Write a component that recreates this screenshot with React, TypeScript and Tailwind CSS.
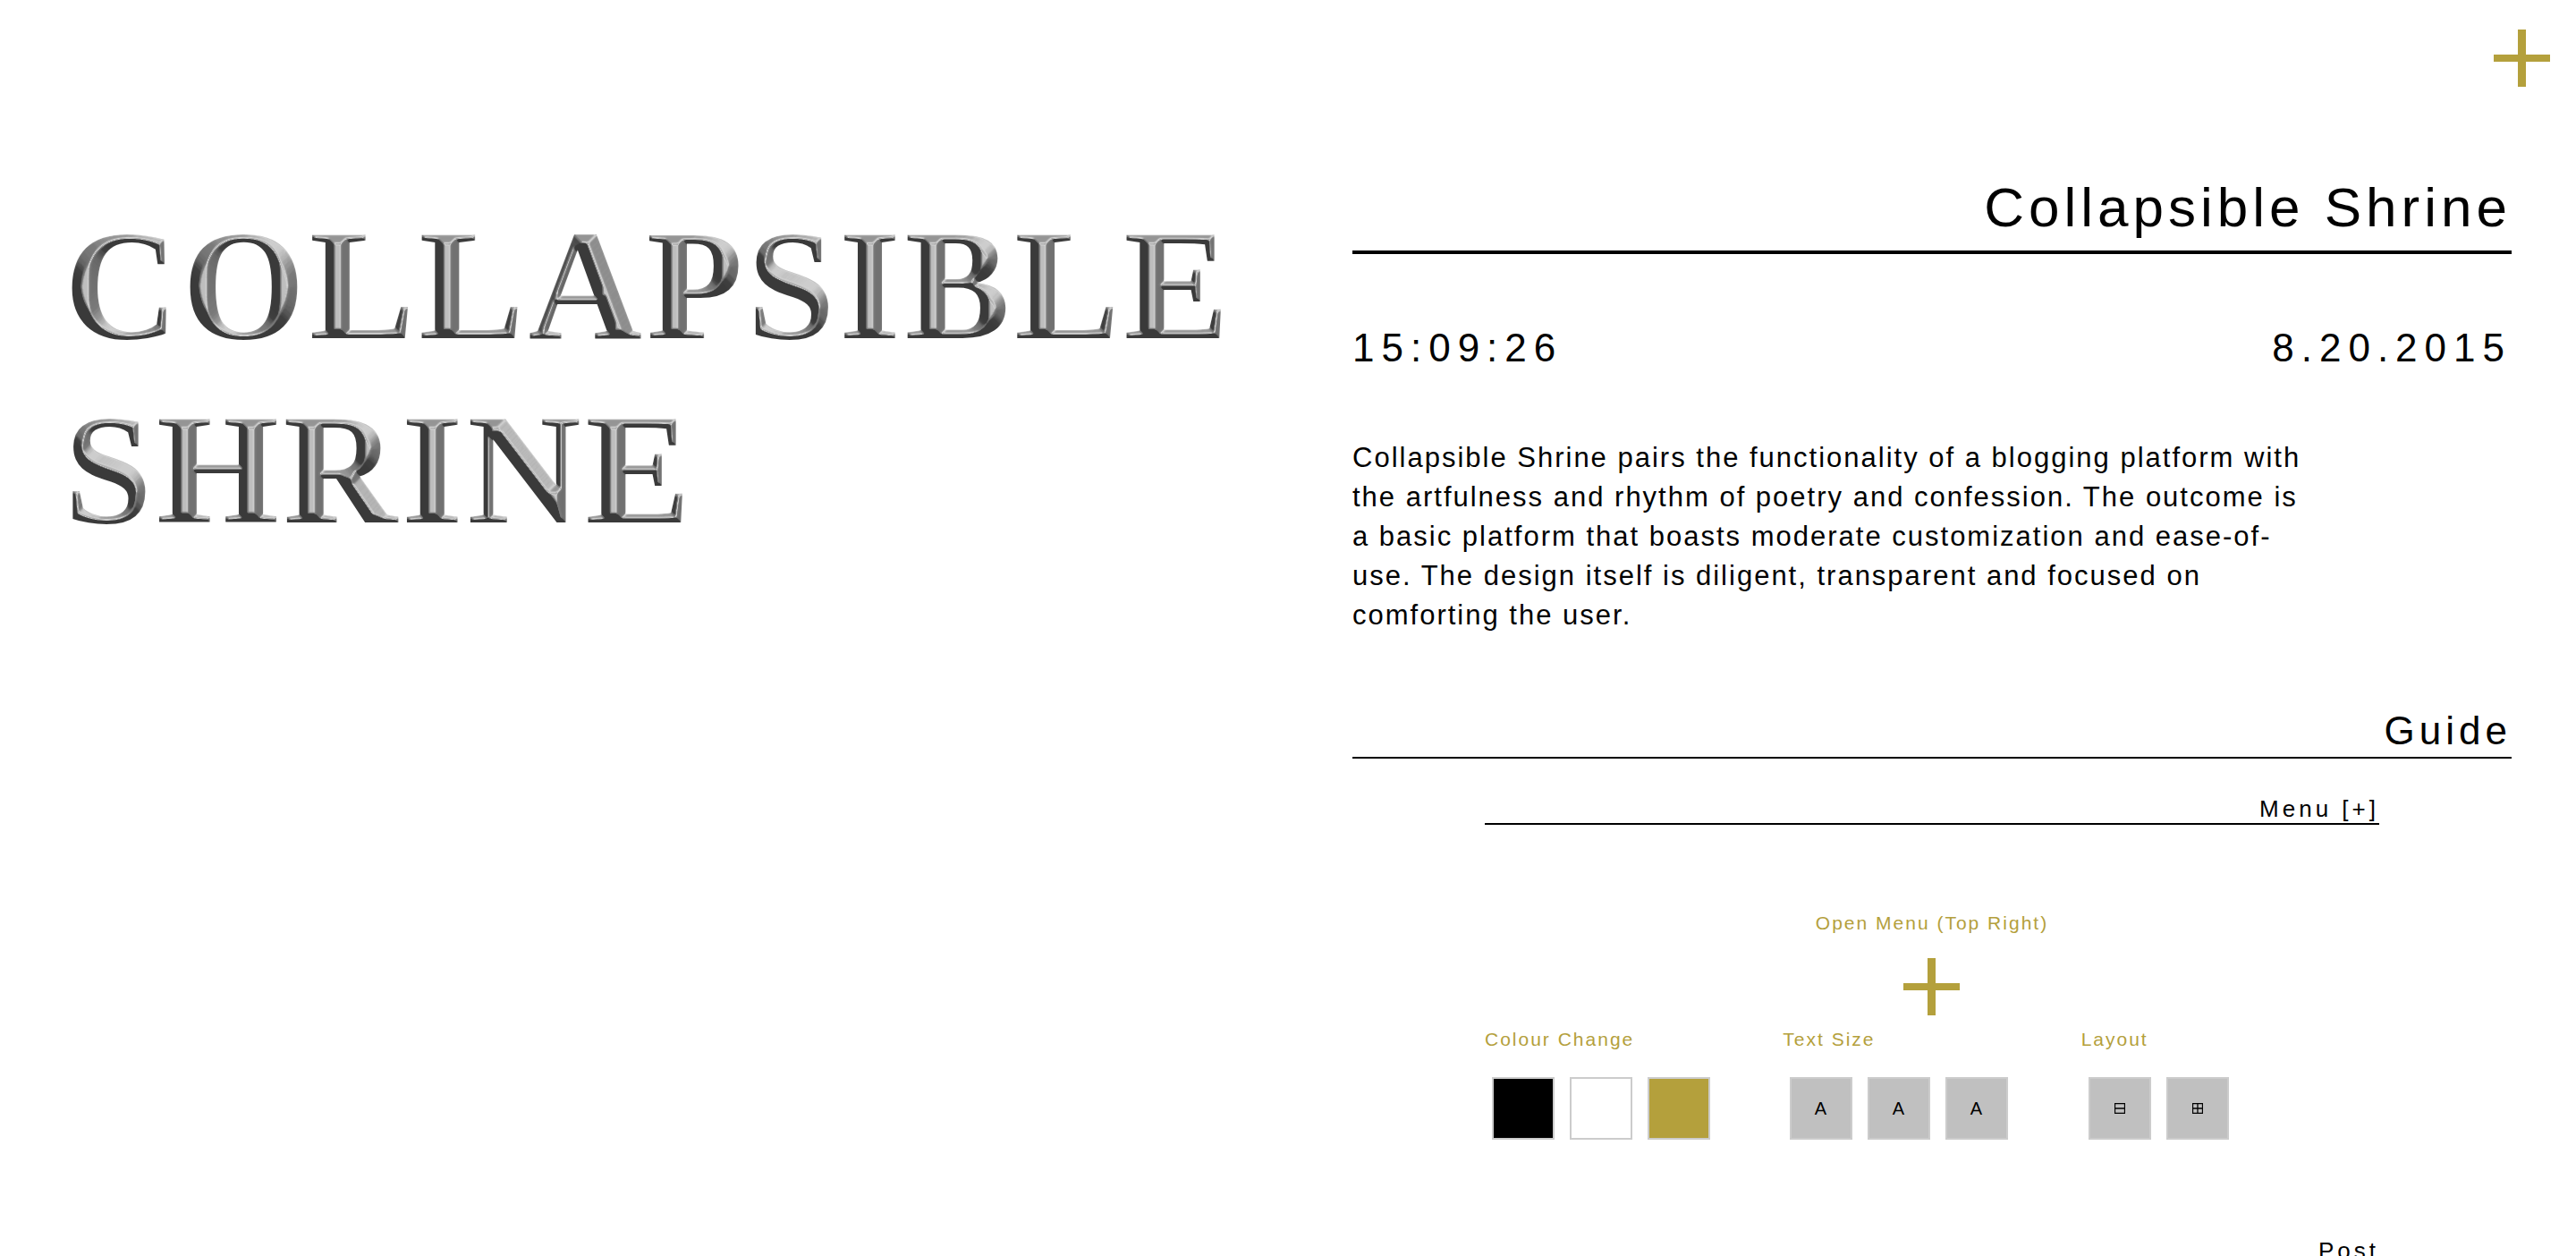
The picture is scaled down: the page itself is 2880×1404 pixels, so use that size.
import { useState } from "react";

const ERODE_STEPS = [1, 2, 3, 4, 5, 6, 7, 8, 9];
const TONES = "0.23 0.23 0.23 0.23 0.25 0.4 0.46 0.48 0.6 0.82 0.66";

function ChiselFilter() {
  return (
    <svg className="absolute h-0 w-0" aria-hidden="true">
      <filter id="chisel" x="-2%" y="-2%" width="104%" height="104%" colorInterpolationFilters="sRGB">
        <feComposite in="SourceAlpha" in2="SourceAlpha" operator="arithmetic" k1="0" k2="0.1" k3="0" k4="0" result="sum0" />
        {ERODE_STEPS.flatMap((n) => [
          <feMorphology key={`e${n}`} in="SourceAlpha" operator="erode" radius={n} result={`erode${n}`} />,
          <feComposite
            key={`s${n}`}
            in={`sum${n - 1}`}
            in2={`erode${n}`}
            operator="arithmetic"
            k1="0"
            k2="1"
            k3="0.1"
            k4="0"
            result={`sum${n}`}
          />,
        ])}
        <feGaussianBlur in="sum9" stdDeviation="0.8" result="height" />
        <feDiffuseLighting in="height" surfaceScale="10" diffuseConstant="1" lightingColor="#ffffff" result="lit">
          <feDistantLight azimuth="-65" elevation="60" />
        </feDiffuseLighting>
        <feComponentTransfer in="lit" result="toned">
          <feFuncR type="table" tableValues={TONES} />
          <feFuncG type="table" tableValues={TONES} />
          <feFuncB type="table" tableValues={TONES} />
        </feComponentTransfer>
        <feComposite in="toned" in2="SourceAlpha" operator="in" />
      </filter>
    </svg>
  );
}

function Plus() {
  return (
    <svg viewBox="0 0 64 64" className="block h-16 w-16" fill="#b4a03c" aria-hidden="true">
      <rect x="27" y="0" width="9" height="64" />
      <rect x="0" y="28" width="63" height="8" />
    </svg>
  );
}

function LayoutIcon({ grid }: { grid?: boolean }) {
  return (
    <svg viewBox="0 0 12 12" className="h-3 w-3" fill="none" stroke="#000" aria-hidden="true">
      <path d="M0.5 0.5h11v11H0.5zM0.5 6h11" strokeWidth="1.3" />
      {grid && <path d="M6 0.5v11" strokeWidth="1.3" />}
    </svg>
  );
}

const box = "flex h-[70px] w-[70px] items-center justify-center border-2 border-[#cccccc] text-xl";

export default function App() {
  const [open, setOpen] = useState(false);
  return (
    <main className="relative grid h-screen grid-cols-2 overflow-hidden bg-white font-['Liberation_Sans',Arial,sans-serif] text-black">
      <ChiselFilter />
      <section className="px-[5%] pt-[216px]">
        <h1 className="font-['Liberation_Serif','Times_New_Roman',serif] text-[176px] leading-[206px] font-bold tracking-[5px] [filter:url(#chisel)]">
          COLLAPSIBLE SHRINE
        </h1>
      </section>

      <section className="px-[5%] pt-[194px]">
        <h2 className="border-b-4 border-black pb-[10px] text-right text-[62px] leading-[76px] tracking-[5px]">Collapsible Shrine</h2>
        <div className="flex justify-between pt-20 text-[44px] leading-[50px] tracking-[8px]">
          <time>15:09:26</time>
          <time dateTime="2015-08-20">8.20.2015</time>
        </div>
        <p className="max-w-[1080px] pt-[76px] text-[31px] leading-[44px] tracking-[2px]">
          Collapsible Shrine pairs the functionality of a blogging platform with the artfulness and rhythm of poetry and
          confession. The outcome is a basic platform that boasts moderate customization and ease-of-use. The design itself is
          diligent, transparent and focused on comforting the user.
        </p>

        <h3 className="mt-[82px] border-b-2 border-black pb-1 text-right text-[44px] leading-[50px] tracking-[5px]">Guide</h3>

        <div className="px-[148px]">
          <h4 className="mt-10 border-b-2 border-black text-right text-[26px] leading-8 tracking-[4px]">Menu [+]</h4>
          <div className="flex flex-col items-center pt-24 text-[21px] leading-7 tracking-[2px] text-[#b4a03c]">
            <p>Open Menu (Top Right)</p>
            <div className="pt-[25px]">
              <Plus />
            </div>
          </div>
          <div className="grid grid-cols-3 pt-[13px] text-[21px] leading-7 tracking-[2px]">
            <div>
              <p className="text-[#b4a03c]">Colour Change</p>
              <div className="flex gap-[17px] pt-7 pl-2">
                <button aria-label="Black" className={`${box} bg-black`} />
                <button aria-label="White" className={`${box} bg-white`} />
                <button aria-label="Gold" className={`${box} bg-[#b4a03c]`} />
              </div>
            </div>
            <div>
              <p className="text-[#b4a03c]">Text Size</p>
              <div className="flex gap-[17px] pt-7 pl-2">
                <button aria-label="Small text" className={`${box} bg-[#c0c0c0]`}>A</button>
                <button aria-label="Medium text" className={`${box} bg-[#c0c0c0]`}>A</button>
                <button aria-label="Large text" className={`${box} bg-[#c0c0c0]`}>A</button>
              </div>
            </div>
            <div>
              <p className="text-[#b4a03c]">Layout</p>
              <div className="flex gap-[17px] pt-7 pl-2">
                <button aria-label="Rows layout" className={`${box} bg-[#c0c0c0]`}>
                  <LayoutIcon />
                </button>
                <button aria-label="Grid layout" className={`${box} bg-[#c0c0c0]`}>
                  <LayoutIcon grid />
                </button>
              </div>
            </div>
          </div>
          <h4 className="mt-[108px] border-b-2 border-black text-right text-[26px] leading-8 tracking-[4px]">Post</h4>
        </div>
      </section>

      <button
        aria-label="Open menu"
        aria-expanded={open}
        onClick={() => setOpen(!open)}
        className="absolute top-[33px] right-7 cursor-pointer"
      >
        <Plus />
      </button>
    </main>
  );
}
